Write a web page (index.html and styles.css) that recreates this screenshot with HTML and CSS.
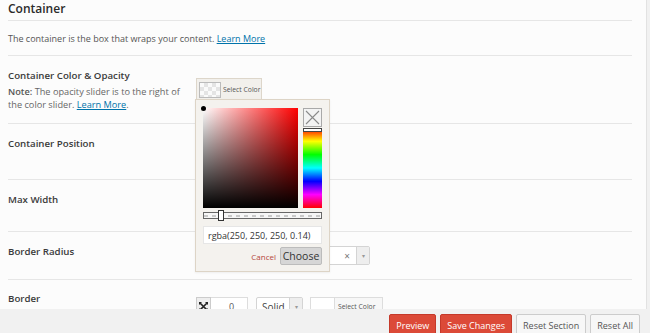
FILE: index.html
```html
<!DOCTYPE html>
<html lang="en">
<head>
    <meta charset="UTF-8">
    <meta name="viewport" content="width=device-width, initial-scale=1.0">
    <title>Container Options</title>
    <link rel="stylesheet" href="styles.css">
</head>
<body>
    <div class="panel">
        <h3 class="section-title">Container</h3>

        <div class="row row-intro">
            <p class="intro">The container is the box that wraps your content. <a href="#">Learn More</a></p>
        </div>

        <div class="row row-color">
            <div class="row-label">
                <h4>Container Color &amp; Opacity</h4>
                <p class="note"><strong>Note:</strong> The opacity slider is to the right of the color slider. <a href="#">Learn More</a>.</p>
            </div>
            <div class="row-field">
                <div class="color-field">
                    <button class="color-button"><span class="swatch swatch-clear"></span><span class="color-button-text">Select Color</span></button>

                    <div class="picker">
                        <div class="picker-top">
                            <div class="sat"><span class="sat-handle"></span></div>
                            <div class="picker-side">
                                <div class="picker-close">
                                    <svg width="17" height="17" viewBox="0 0 17 17"><path d="M2 2l13 13M15 2L2 15" stroke="#8a8a8a" stroke-width="1.1" fill="none"/></svg>
                                </div>
                                <div class="hue"><span class="hue-handle"></span></div>
                            </div>
                        </div>
                        <div class="alpha"><span class="alpha-handle"></span></div>
                        <input class="picker-input" type="text" value="rgba(250, 250, 250, 0.14)" readonly>
                        <div class="picker-actions">
                            <a href="#" class="picker-cancel">Cancel</a>
                            <button class="picker-choose">Choose</button>
                        </div>
                    </div>
                </div>
            </div>
        </div>

        <div class="row row-position">
            <div class="row-label"><h4>Container Position</h4></div>
            <div class="row-field"></div>
        </div>

        <div class="row row-width">
            <div class="row-label"><h4>Max Width</h4></div>
            <div class="row-field"></div>
        </div>

        <div class="row row-radius">
            <div class="row-label"><h4>Border Radius</h4></div>
            <div class="row-field">
                <div class="select select-wide">
                    <span class="select-clear">&times;</span>
                    <span class="select-arrow">&#9662;</span>
                </div>
            </div>
        </div>

        <div class="row row-border">
            <div class="row-label"><h4>Border</h4></div>
            <div class="row-field">
                <div class="border-controls">
                    <div class="border-width">
                        <span class="border-icon">
                            <svg width="9" height="9" viewBox="0 0 9 9"><path d="M1.2 1.2l6.6 6.6M7.8 1.2L1.2 7.8" stroke="#222" stroke-width="1.6" fill="none"/><path d="M0 0h3L0 3zM9 0v3L6 0zM0 9V6l3 3zM9 9H6l3-3z" fill="#222"/></svg>
                        </span>
                        <span class="border-input">0</span>
                    </div>
                    <div class="select select-style">
                        <span class="select-text">Solid</span>
                        <span class="select-arrow">&#9662;</span>
                    </div>
                    <button class="color-button color-button-small"><span class="swatch"></span><span class="color-button-text">Select Color</span></button>
                </div>
            </div>
        </div>
    </div>

    <div class="actions">
        <button class="btn btn-primary">Preview</button>
        <button class="btn btn-primary">Save Changes</button>
        <button class="btn">Reset Section</button>
        <button class="btn">Reset All</button>
    </div>
</body>
</html>
```

FILE: styles.css
```css
* {
    margin: 0;
    padding: 0;
    box-sizing: border-box;
}

body {
    width: 650px;
    height: 333px;
    overflow: hidden;
    display: flex;
    flex-direction: column;
    background-color: #f1f1f1;
    color: #333;
    font-family: "Open Sans", sans-serif;
}

a {
    color: #0073aa;
}

button {
    font-family: "Open Sans", sans-serif;
    cursor: pointer;
}

.panel {
    flex: 1;
    overflow: hidden;
    width: 647px;
    padding: 0 14px 0 8px;
    background-color: #fcfcfc;
    border-right: 1px solid #e2e2e2;
}

.section-title {
    height: 21px;
    line-height: 18px;
    font-size: 12px;
    font-weight: 600;
    color: #2b2b2b;
    border-bottom: 1px solid #e6e6e6;
}

.row {
    display: flex;
    padding-top: 13px;
    border-bottom: 1px solid #e6e6e6;
}

.row-intro {
    height: 35px;
    padding-top: 11px;
}

.row-color {
    height: 68px;
}

.row-position {
    height: 56px;
}

.row-width {
    height: 52px;
}

.row-radius {
    height: 48px;
}

.row-border {
    padding-top: 12px;
    border-bottom: 0;
}

.intro {
    font-size: 9px;
    line-height: 14px;
    color: #555;
}

.row-label {
    width: 188px;
    flex-shrink: 0;
    padding-right: 8px;
}

.row-label h4 {
    font-size: 9.7px;
    font-weight: 600;
    line-height: 14px;
    color: #3a3a3a;
}

.note {
    margin-top: 2px;
    font-size: 9.2px;
    line-height: 13px;
    color: #666;
}

.note strong {
    font-weight: 600;
    color: #555;
}

.row-field {
    flex: 1;
}

/* color button + picker */
.color-field {
    position: relative;
    width: 66px;
    margin-top: 9px;
}

.color-button {
    display: flex;
    align-items: center;
    width: 66px;
    height: 22px;
    padding: 0 0 0 2px;
    background-color: #f2f0ec;
    border: 1px solid #ddd6ca;
    border-bottom: 0;
}

.swatch {
    width: 22px;
    height: 16px;
    flex-shrink: 0;
    border: 1px solid #bbb;
    background-color: #fff;
}

.swatch-clear {
    background-image: conic-gradient(#e4e4e4 25%, #fafafa 0 50%, #e4e4e4 0 75%, #fafafa 0);
    background-size: 8px 8px;
}

.color-button-text {
    padding-left: 2px;
    font-size: 6.8px;
    color: #555;
    white-space: nowrap;
}

.picker {
    position: absolute;
    left: -1px;
    top: 21px;
    z-index: 2;
    width: 135px;
    height: 173px;
    padding: 8px 7px 0;
    background-color: #f4f2ee;
    border: 1px solid #ddd4c6;
    box-shadow: 0 1px 2px rgba(0, 0, 0, 0.06);
}

.picker-top {
    display: flex;
    gap: 5px;
    height: 100px;
}

.sat {
    position: relative;
    width: 95px;
    height: 100px;
    background: linear-gradient(to top, #000, rgba(0, 0, 0, 0)), linear-gradient(to right, #fff, #f00);
}

.sat-handle {
    position: absolute;
    left: -2px;
    top: -2px;
    width: 5px;
    height: 5px;
    border-radius: 50%;
    background-color: #000;
}

.picker-side {
    display: flex;
    flex-direction: column;
    gap: 1px;
    width: 19px;
}

.picker-close {
    display: flex;
    align-items: center;
    justify-content: center;
    height: 19px;
    background-color: #f3f3f3;
    border: 1px solid #a9a9a9;
}

.hue {
    position: relative;
    flex: 1;
    background: linear-gradient(to bottom, #f00, #ff0 16.6%, #0f0 33.3%, #0ff 50%, #00f 66.6%, #f0f 83.3%, #f00);
}

.hue-handle {
    position: absolute;
    left: 0;
    right: 0;
    top: 0;
    height: 4px;
    background-color: #fff;
    border: 1px solid #444;
}

.alpha {
    position: relative;
    height: 7px;
    margin-top: 4px;
    background-color: #f6f6f6;
    background-image: repeating-linear-gradient(90deg, #c8c8c8 0 4px, transparent 4px 8px);
    background-size: 100% 2px;
    background-position: center;
    background-repeat: no-repeat;
    border: 1px solid #666;
}

.alpha-handle {
    position: absolute;
    left: 14px;
    top: -3px;
    width: 6px;
    height: 11px;
    background-color: #fff;
    border: 1px solid #333;
}

.picker-input {
    display: block;
    width: 100%;
    height: 18px;
    margin-top: 7px;
    padding: 0 4px;
    font-family: "Open Sans", sans-serif;
    font-size: 9px;
    color: #333;
    background-color: #fff;
    border: 1px solid #e6e6e6;
    outline: none;
}

.picker-actions {
    display: flex;
    justify-content: flex-end;
    align-items: center;
    gap: 4px;
    margin-top: 3px;
}

.picker-cancel {
    font-size: 8px;
    color: #b5473c;
    text-decoration: none;
}

.picker-choose {
    width: 42px;
    height: 18px;
    font-size: 10.5px;
    color: #333;
    background-color: #d6d6d6;
    border: 1px solid #bcbcbc;
    border-radius: 2px;
}

/* selects */
.select {
    display: flex;
    align-items: center;
    justify-content: flex-end;
    height: 19px;
    background-color: #fff;
    border: 1px solid #d4d4d4;
    border-radius: 2px;
}

.select-wide {
    width: 174px;
    margin-top: 1px;
}

.select-clear {
    margin-right: 6px;
    font-size: 10px;
    color: #777;
}

.select-arrow {
    display: flex;
    align-items: center;
    justify-content: center;
    width: 13px;
    height: 100%;
    font-size: 6px;
    color: #999;
    background-color: #eee;
    border-left: 1px solid #d4d4d4;
}

.select-style {
    width: 47px;
    margin-left: 8px;
}

.select-text {
    flex: 1;
    padding-left: 5px;
    font-size: 10px;
    color: #444;
}

/* border row */
.border-controls {
    display: flex;
    margin-top: 5px;
}

.border-width {
    display: flex;
    height: 19px;
}

.border-icon {
    display: flex;
    align-items: center;
    justify-content: center;
    width: 15px;
    background-color: #eee;
    border: 1px solid #ccc;
}

.border-input {
    width: 37px;
    padding-left: 18px;
    font-size: 9px;
    line-height: 17px;
    color: #555;
    background-color: #fff;
    border: 1px solid #ddd;
    border-left: 0;
}

.color-button-small {
    width: 73px;
    height: 19px;
    margin-left: 7px;
    padding: 0;
    background-color: #f7f7f7;
    border: 1px solid #ddd;
}

.color-button-small .swatch {
    width: 24px;
    height: 17px;
    border: 0;
    border-right: 1px solid #ddd;
}

.color-button-small .color-button-text {
    padding-left: 3px;
}

/* bottom bar */
.actions {
    display: flex;
    justify-content: flex-end;
    gap: 4px;
    height: 24px;
    padding: 5px 10px 0 0;
    background-color: #f1f1f1;
}

.btn {
    height: 22px;
    padding: 0 6px;
    font-size: 9px;
    color: #555;
    background-color: #f7f7f7;
    border: 1px solid #ccc;
    border-radius: 2px;
}

.btn-primary {
    color: #fff;
    background-color: #dc4a38;
    border-color: #c5392a;
}
```
